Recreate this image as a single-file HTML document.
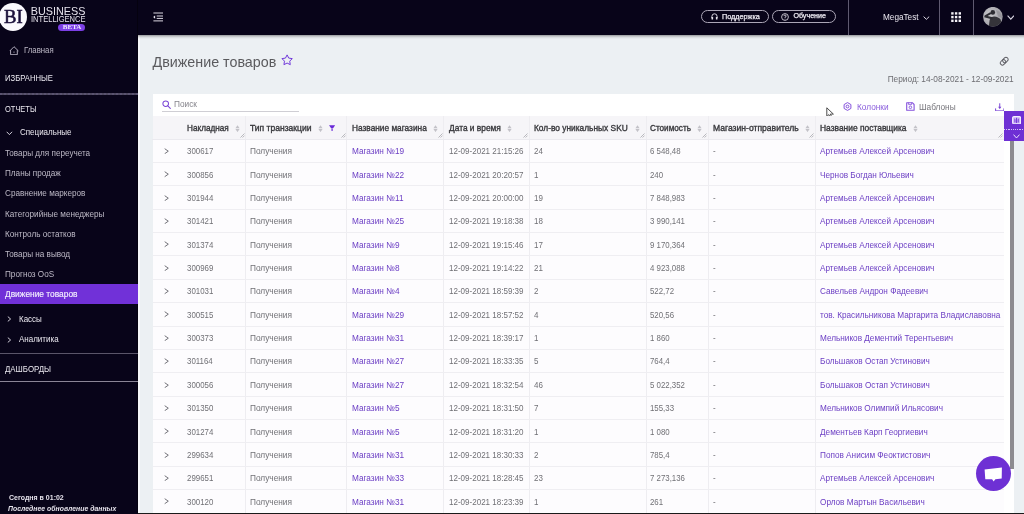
<!DOCTYPE html>
<html><head><meta charset="utf-8"><title>Движение товаров</title>
<style>
html,body{margin:0;padding:0;width:1024px;height:514px;overflow:hidden;background:#eef0f3;}
body{position:relative;font-family:"Liberation Sans", sans-serif;}
.t{position:absolute;white-space:nowrap;line-height:1;}
body{will-change:transform;}
.r{position:absolute;}
</style></head><body>
<div class="r" style="left:0px;top:0px;width:1024px;height:514px;background:#ecf0f3;"></div>
<div class="r" style="left:138px;top:35px;width:2px;height:479px;background:#f7f8fa;"></div>
<div class="r" style="left:0px;top:0px;width:1024px;height:35.2px;background:#080419;"></div>
<div class="r" style="left:138px;top:35.2px;width:886px;height:4px;background:linear-gradient(rgba(0,0,0,.36),rgba(0,0,0,.1) 50%,rgba(0,0,0,0));"></div>
<div class="r" style="left:0px;top:0px;width:138px;height:514px;background:#080419;"></div>
<div class="r" style="left:136.7px;top:0px;width:1px;height:514px;background:#05020f;"></div>
<div class="r" style="left:-1px;top:3px;width:28px;height:28px;border-radius:50%;background:#faf9fd"></div>
<div class="t" style="left:3.90px;top:7.12px;font-size:19.0px;color:#1a0f3a;font-weight:400;font-style:normal;font-family:'Liberation Serif', serif;-webkit-text-stroke:0.55px #1a0f3a;transform:scaleX(0.980);transform-origin:0 0;">BI</div>
<div class="t" style="left:30.80px;top:5.96px;font-size:10.8px;color:#e6e3ec;font-weight:400;font-style:normal;font-family:'Liberation Sans', sans-serif;">BUSINESS</div>
<div class="t" style="left:31.00px;top:15.17px;font-size:8.3px;color:#e6e3ec;font-weight:400;font-style:normal;font-family:'Liberation Sans', sans-serif;transform:scaleX(0.910);transform-origin:0 0;">INTELLIGENCE</div>
<div class="r" style="left:58px;top:23.7px;width:27.4px;height:7.4px;border-radius:4px;background:#7b3fe4"></div>
<div class="t" style="left:62.80px;top:24.07px;font-size:7.0px;color:#efeaff;font-weight:700;font-style:normal;font-family:'Liberation Serif', serif;">BETA</div>
<svg class="r" style="left:9px;top:45.5px" width="10.5" height="9.5" viewBox="0 0 10.5 9.5"><path d="M0.9 4.9 L5 0.7 L9.4 4.9 M1.6 4.3 V8.7 H8.3 V4.3" fill="none" stroke="#cfcad9" stroke-width="0.85" stroke-linejoin="round"/><path d="M5 5.2 L4 6.4 H6 Z" fill="#a39fb0"/></svg>
<div class="t" style="left:24.30px;top:46.86px;font-size:8.2px;color:#bdb9c6;font-weight:400;font-style:normal;font-family:'Liberation Sans', sans-serif;transform:scaleX(0.951);transform-origin:0 0;">Главная</div>
<div class="t" style="left:4.90px;top:74.09px;font-size:8.4px;color:#ebe9f0;font-weight:400;font-style:normal;font-family:'Liberation Sans', sans-serif;transform:scaleX(0.917);transform-origin:0 0;">ИЗБРАННЫЕ</div>
<div class="r" style="left:0px;top:92.6px;width:138px;height:2.8px;background:#040210;"></div>
<div class="r" style="left:0px;top:93.2px;width:138px;height:1.7px;background:repeating-linear-gradient(90deg,#5a5370 0 2px,#4f4a60 2px 4px);"></div>
<div class="t" style="left:5.00px;top:105.49px;font-size:8.4px;color:#ebe9f0;font-weight:400;font-style:normal;font-family:'Liberation Sans', sans-serif;transform:scaleX(0.893);transform-origin:0 0;">ОТЧЕТЫ</div>
<svg class="r" style="left:6px;top:130.5px" width="7" height="5" viewBox="0 0 7 5"><path d="M0.7 0.8 L3.4 3.6 L6.1 0.8" fill="none" stroke="#e6e3ec" stroke-width="0.9"/></svg>
<div class="t" style="left:19.50px;top:128.20px;font-size:8.5px;color:#ebe9f0;font-weight:400;font-style:normal;font-family:'Liberation Sans', sans-serif;transform:scaleX(0.941);transform-origin:0 0;">Специальные</div>
<div class="t" style="left:4.90px;top:148.92px;font-size:8.6px;color:#bdb9c6;font-weight:400;font-style:normal;font-family:'Liberation Sans', sans-serif;transform:scaleX(0.948);transform-origin:0 0;">Товары для переучета</div>
<div class="t" style="left:4.90px;top:169.12px;font-size:8.6px;color:#bdb9c6;font-weight:400;font-style:normal;font-family:'Liberation Sans', sans-serif;transform:scaleX(0.948);transform-origin:0 0;">Планы продаж</div>
<div class="t" style="left:4.90px;top:189.32px;font-size:8.6px;color:#bdb9c6;font-weight:400;font-style:normal;font-family:'Liberation Sans', sans-serif;transform:scaleX(0.948);transform-origin:0 0;">Сравнение маркеров</div>
<div class="t" style="left:4.90px;top:209.52px;font-size:8.6px;color:#bdb9c6;font-weight:400;font-style:normal;font-family:'Liberation Sans', sans-serif;transform:scaleX(0.948);transform-origin:0 0;">Категорийные менеджеры</div>
<div class="t" style="left:4.90px;top:229.72px;font-size:8.6px;color:#bdb9c6;font-weight:400;font-style:normal;font-family:'Liberation Sans', sans-serif;transform:scaleX(0.948);transform-origin:0 0;">Контроль остатков</div>
<div class="t" style="left:4.90px;top:249.92px;font-size:8.6px;color:#bdb9c6;font-weight:400;font-style:normal;font-family:'Liberation Sans', sans-serif;transform:scaleX(0.948);transform-origin:0 0;">Товары на вывод</div>
<div class="t" style="left:4.90px;top:270.12px;font-size:8.6px;color:#bdb9c6;font-weight:400;font-style:normal;font-family:'Liberation Sans', sans-serif;transform:scaleX(0.948);transform-origin:0 0;">Прогноз OoS</div>
<div class="r" style="left:0px;top:283.7px;width:138px;height:20.1px;background:#7131d8;"></div>
<div class="t" style="left:5.00px;top:289.52px;font-size:8.6px;color:#f3efff;font-weight:400;font-style:normal;font-family:'Liberation Sans', sans-serif;-webkit-text-stroke:0.15px #f3efff;transform:scaleX(0.974);transform-origin:0 0;">Движение товаров</div>
<svg class="r" style="left:6.5px;top:316.4px" width="5" height="6" viewBox="0 0 5 6"><path d="M0.8 0.6 L3.6 3 L0.8 5.4" fill="none" stroke="#e6e3ec" stroke-width="0.9"/></svg>
<div class="t" style="left:19.30px;top:315.00px;font-size:8.5px;color:#ebe9f0;font-weight:400;font-style:normal;font-family:'Liberation Sans', sans-serif;transform:scaleX(0.941);transform-origin:0 0;">Кассы</div>
<svg class="r" style="left:6.5px;top:336.59999999999997px" width="5" height="6" viewBox="0 0 5 6"><path d="M0.8 0.6 L3.6 3 L0.8 5.4" fill="none" stroke="#e6e3ec" stroke-width="0.9"/></svg>
<div class="t" style="left:19.30px;top:335.20px;font-size:8.5px;color:#ebe9f0;font-weight:400;font-style:normal;font-family:'Liberation Sans', sans-serif;transform:scaleX(0.941);transform-origin:0 0;">Аналитика</div>
<div class="r" style="left:0px;top:353.2px;width:138px;height:1.2px;background:#5a5569;"></div>
<div class="t" style="left:5.00px;top:364.69px;font-size:8.4px;color:#ebe9f0;font-weight:400;font-style:normal;font-family:'Liberation Sans', sans-serif;transform:scaleX(0.940);transform-origin:0 0;">ДАШБОРДЫ</div>
<div class="r" style="left:0px;top:380.8px;width:138px;height:1px;background:#8a8596;"></div>
<div class="t" style="left:8.50px;top:493.54px;font-size:7.4px;color:#e6e3ec;font-weight:700;font-style:normal;font-family:'Liberation Sans', sans-serif;transform:scaleX(0.946);transform-origin:0 0;">Сегодня в 01:02</div>
<div class="t" style="left:8.30px;top:504.51px;font-size:7.2px;color:#e6e3ec;font-weight:700;font-style:italic;font-family:'Liberation Sans', sans-serif;transform:scaleX(0.958);transform-origin:0 0;">Последнее обновление данных</div>
<svg class="r" style="left:152.5px;top:11.5px" width="11" height="10" viewBox="0 0 11 10"><path d="M0.4 1.0 H10 M3.7 4.0 H10 M3.7 6.4 H10 M0.4 8.9 H10" stroke="#e8e5ee" stroke-width="0.95"/><path d="M0.2 5.1 L2.1 3.4 V6.8 Z" fill="#eeeaf5"/></svg>
<div class="r" style="left:700.6px;top:10.2px;width:68.3px;height:12.9px;border:0.9px solid #aba6b6;border-radius:7px;box-sizing:border-box"></div>
<div class="r" style="left:772px;top:10.2px;width:64.4px;height:12.9px;border:0.9px solid #aba6b6;border-radius:7px;box-sizing:border-box"></div>
<svg class="r" style="left:710.8px;top:13.2px" width="7" height="7" viewBox="0 0 7 7"><path d="M0.9 5 V3.4 A2.6 2.6 0 0 1 6.1 3.4 V5" fill="none" stroke="#e8e5ee" stroke-width="0.9"/><rect x="0.5" y="4" width="1.6" height="2.6" rx="0.5" fill="#e8e5ee"/><rect x="4.9" y="4" width="1.6" height="2.6" rx="0.5" fill="#e8e5ee"/></svg>
<div class="t" style="left:722.00px;top:13.16px;font-size:7.25px;color:#ece9f1;font-weight:400;font-style:normal;font-family:'Liberation Sans', sans-serif;-webkit-text-stroke:0.25px #ece9f1;">Поддержка</div>
<svg class="r" style="left:781.2px;top:12.6px" width="8" height="8" viewBox="0 0 8 8"><circle cx="4" cy="4" r="3.4" fill="none" stroke="#e8e5ee" stroke-width="0.8"/><path d="M2.9 3.1 A1.1 1.1 0 1 1 4 4.2 V4.9" fill="none" stroke="#e8e5ee" stroke-width="0.8"/><circle cx="4" cy="5.9" r="0.45" fill="#e8e5ee"/></svg>
<div class="t" style="left:793.40px;top:13.26px;font-size:7.13px;color:#ece9f1;font-weight:400;font-style:normal;font-family:'Liberation Sans', sans-serif;-webkit-text-stroke:0.25px #ece9f1;">Обучение</div>
<div class="r" style="left:848.4px;top:0px;width:0.9px;height:35.2px;background:#5f5a70;"></div>
<div class="r" style="left:939.4px;top:0px;width:0.9px;height:35.2px;background:#5f5a70;"></div>
<div class="r" style="left:973.3px;top:0px;width:0.9px;height:35.2px;background:#5f5a70;"></div>
<div class="t" style="left:883.00px;top:12.94px;font-size:8.7px;color:#ebe8f0;font-weight:400;font-style:normal;font-family:'Liberation Sans', sans-serif;transform:scaleX(0.943);transform-origin:0 0;">MegaTest</div>
<svg class="r" style="left:922.6px;top:15.6px" width="7" height="4" viewBox="0 0 7 4"><path d="M0.6 0.6 L3.4 3.3 L6.2 0.6" fill="none" stroke="#dcd8e4" stroke-width="1"/></svg>
<svg class="r" style="left:951.4px;top:11.7px" width="10" height="10" viewBox="0 0 10 10"><rect x="0.2" y="0.2" width="2.4" height="2.4" fill="#f4f2f7"/><rect x="0.2" y="3.9000000000000004" width="2.4" height="2.4" fill="#f4f2f7"/><rect x="0.2" y="7.6000000000000005" width="2.4" height="2.4" fill="#f4f2f7"/><rect x="3.9000000000000004" y="0.2" width="2.4" height="2.4" fill="#f4f2f7"/><rect x="3.9000000000000004" y="3.9000000000000004" width="2.4" height="2.4" fill="#f4f2f7"/><rect x="3.9000000000000004" y="7.6000000000000005" width="2.4" height="2.4" fill="#f4f2f7"/><rect x="7.6000000000000005" y="0.2" width="2.4" height="2.4" fill="#f4f2f7"/><rect x="7.6000000000000005" y="3.9000000000000004" width="2.4" height="2.4" fill="#f4f2f7"/><rect x="7.6000000000000005" y="7.6000000000000005" width="2.4" height="2.4" fill="#f4f2f7"/></svg>
<svg class="r" style="left:982.9px;top:7px" width="20" height="20" viewBox="0 0 20 20"><defs><clipPath id="av"><circle cx="9.9" cy="9.7" r="9.8"/></clipPath><radialGradient id="avg" cx="0.35" cy="0.4" r="0.7"><stop offset="0" stop-color="#c9c8cc"/><stop offset="1" stop-color="#9d9ca2"/></radialGradient></defs><circle cx="9.9" cy="9.7" r="9.8" fill="url(#avg)"/><g clip-path="url(#av)" fill="#2e2d33"><path d="M5.8 20 L6.6 13 Q8 9.6 11.2 9.4 Q15.5 9.6 17.5 12.5 L20 20 Z" fill="#35343a"/><circle cx="9.8" cy="5.4" r="2.3"/><path d="M9.5 12.6 L1.2 10.3 L1.6 8.6 L7.2 5.2 L8.6 6.8 L4.6 9.1 L9.5 10.2 Z"/><path d="M13 3 Q17 4 18.5 8 L19 11 L15 9.5 Z" fill="#8a898f" opacity="0.6"/></g></svg>
<svg class="r" style="left:1006.9px;top:15.4px" width="7.6" height="5" viewBox="0 0 7.6 5"><path d="M0.6 0.7 L3.8 4.1 L7 0.7" fill="none" stroke="#dcd8e4" stroke-width="1.1"/></svg>
<div class="t" style="left:152.50px;top:55.10px;font-size:14.3px;color:#5a5a5d;font-weight:400;font-style:normal;font-family:'Liberation Sans', sans-serif;">Движение товаров</div>
<svg class="r" style="left:280.5px;top:54.0px" width="12.5" height="12.5" viewBox="0 0 12.5 12.5"><path d="M6.10 0.90 L7.72 4.08 L11.24 4.63 L8.72 7.15 L9.27 10.67 L6.10 9.05 L2.93 10.67 L3.48 7.15 L0.96 4.63 L4.48 4.08 Z" fill="none" stroke="#6a30d8" stroke-width="0.95" stroke-linejoin="round"/></svg>
<svg class="r" style="left:999.3px;top:56.3px" width="10.4" height="10.4" viewBox="0 0 10.4 10.4"><g transform="rotate(-45 5.2 5.2)" fill="none" stroke="#5e5e64" stroke-width="0.95"><rect x="0.6" y="3.1" width="5.8" height="4.2" rx="2.1"/><rect x="4.0" y="3.1" width="5.8" height="4.2" rx="2.1"/></g></svg>
<div class="t" style="right:10.40px;top:75.37px;font-size:8.3px;color:#6d6d72;font-weight:400;font-style:normal;font-family:'Liberation Sans', sans-serif;">Период: 14-08-2021 - 12-09-2021</div>
<div class="r" style="left:152.6px;top:94px;width:861.4px;height:420px;background:#ffffff;"></div>
<svg class="r" style="left:161.8px;top:99.5px" width="9" height="9" viewBox="0 0 9 9"><circle cx="3.7" cy="3.7" r="2.8" fill="none" stroke="#7a45d6" stroke-width="1.05"/><path d="M5.8 5.8 L8.3 8.3" stroke="#7a45d6" stroke-width="1.1" stroke-linecap="round"/></svg>
<div class="t" style="left:174.00px;top:100.05px;font-size:8.8px;color:#85848b;font-weight:400;font-style:normal;font-family:'Liberation Sans', sans-serif;transform:scaleX(0.943);transform-origin:0 0;">Поиск</div>
<div class="r" style="left:162px;top:111px;width:137px;height:0.9px;background:#cfced4;"></div>
<svg class="r" style="left:842.6px;top:101.8px" width="9" height="9" viewBox="0 0 9 9"><path d="M4.5 0.6 L7.9 2.55 V6.45 L4.5 8.4 L1.1 6.45 V2.55 Z" fill="none" stroke="#8552dc" stroke-width="1"/><circle cx="4.5" cy="4.5" r="1.4" fill="none" stroke="#8552dc" stroke-width="1"/></svg>
<div class="t" style="left:856.50px;top:102.94px;font-size:8.7px;color:#8b5fdc;font-weight:400;font-style:normal;font-family:'Liberation Sans', sans-serif;transform:scaleX(0.954);transform-origin:0 0;">Колонки</div>
<svg class="r" style="left:905.8px;top:102.4px" width="9" height="9" viewBox="0 0 9 9"><path d="M0.7 0.7 H6.3 L8.1 2.5 V8.2 H0.7 Z" fill="none" stroke="#8552dc" stroke-width="1.1" stroke-linejoin="round"/><path d="M2.6 0.7 V2.6 H5.6 V0.7" fill="none" stroke="#8552dc" stroke-width="0.8"/><circle cx="4.4" cy="5.3" r="1.3" fill="none" stroke="#8552dc" stroke-width="0.9"/></svg>
<div class="t" style="left:919.00px;top:102.94px;font-size:8.7px;color:#76757b;font-weight:400;font-style:normal;font-family:'Liberation Sans', sans-serif;transform:scaleX(0.954);transform-origin:0 0;">Шаблоны</div>
<svg class="r" style="left:995px;top:102.6px" width="9.5" height="8.5" viewBox="0 0 9.5 8.5"><path d="M4.75 0.3 V5.2 M0.6 5.4 V7.9 H8.9 V5.4" fill="none" stroke="#7a45d6" stroke-width="1"/><path d="M3.1 3.8 L4.75 5.9 L6.4 3.8 Z" fill="#7a45d6"/></svg>
<svg class="r" style="left:826px;top:106.6px" width="9" height="12" viewBox="0 0 9 12"><path d="M0.8 0.8 L0.8 9.5 L2.9 7.6 L4.5 11 L5.9 10.4 L4.4 7.1 L7.4 7.1 Z" fill="#fafafa" stroke="#3a3a3a" stroke-width="0.9" stroke-linejoin="round"/></svg>
<div class="r" style="left:152.6px;top:116px;width:851.4px;height:23.599999999999994px;background:#f6f5f8;"></div>
<div class="r" style="left:152.6px;top:139.6px;width:851.4px;height:374.4px;background:#fdfcfe;"></div>
<div class="r" style="left:245.4px;top:116px;width:0.8px;height:398px;background:#eeedf1;"></div>
<div class="r" style="left:346.2px;top:116px;width:0.8px;height:398px;background:#eeedf1;"></div>
<div class="r" style="left:443.2px;top:116px;width:0.8px;height:398px;background:#eeedf1;"></div>
<div class="r" style="left:529.0px;top:116px;width:0.8px;height:398px;background:#eeedf1;"></div>
<div class="r" style="left:645.6px;top:116px;width:0.8px;height:398px;background:#eeedf1;"></div>
<div class="r" style="left:707.5px;top:116px;width:0.8px;height:398px;background:#eeedf1;"></div>
<div class="r" style="left:815.0px;top:116px;width:0.8px;height:398px;background:#eeedf1;"></div>
<div class="r" style="left:152.6px;top:162.0px;width:851.4px;height:0.9px;background:#efeef2;"></div>
<div class="r" style="left:152.6px;top:185.37px;width:851.4px;height:0.9px;background:#efeef2;"></div>
<div class="r" style="left:152.6px;top:208.74px;width:851.4px;height:0.9px;background:#efeef2;"></div>
<div class="r" style="left:152.6px;top:232.11px;width:851.4px;height:0.9px;background:#efeef2;"></div>
<div class="r" style="left:152.6px;top:255.48000000000002px;width:851.4px;height:0.9px;background:#efeef2;"></div>
<div class="r" style="left:152.6px;top:278.85px;width:851.4px;height:0.9px;background:#efeef2;"></div>
<div class="r" style="left:152.6px;top:302.22px;width:851.4px;height:0.9px;background:#efeef2;"></div>
<div class="r" style="left:152.6px;top:325.59000000000003px;width:851.4px;height:0.9px;background:#efeef2;"></div>
<div class="r" style="left:152.6px;top:348.96000000000004px;width:851.4px;height:0.9px;background:#efeef2;"></div>
<div class="r" style="left:152.6px;top:372.33000000000004px;width:851.4px;height:0.9px;background:#efeef2;"></div>
<div class="r" style="left:152.6px;top:395.70000000000005px;width:851.4px;height:0.9px;background:#efeef2;"></div>
<div class="r" style="left:152.6px;top:419.07px;width:851.4px;height:0.9px;background:#efeef2;"></div>
<div class="r" style="left:152.6px;top:442.44px;width:851.4px;height:0.9px;background:#efeef2;"></div>
<div class="r" style="left:152.6px;top:465.81px;width:851.4px;height:0.9px;background:#efeef2;"></div>
<div class="r" style="left:152.6px;top:489.18px;width:851.4px;height:0.9px;background:#efeef2;"></div>
<div class="r" style="left:152px;top:139.2px;width:852px;height:0.8px;background:#ebeaef;"></div>
<div class="t" style="left:186.60px;top:123.82px;font-size:8.6px;color:#38383c;font-weight:400;font-style:normal;font-family:'Liberation Sans', sans-serif;-webkit-text-stroke:0.35px #38383c;transform:scaleX(0.953);transform-origin:0 0;">Накладная</div>
<svg class="r" style="left:234.7px;top:124.9px" width="5" height="7.5" viewBox="0 0 5 7.5"><path d="M0.4 3.3 L2.5 0.3 L4.6 3.3 Z M0.4 4.0 L2.5 7.1 L4.6 4.0 Z" fill="#c3c2c8"/></svg>
<div class="t" style="left:250.30px;top:123.82px;font-size:8.6px;color:#38383c;font-weight:400;font-style:normal;font-family:'Liberation Sans', sans-serif;-webkit-text-stroke:0.35px #38383c;transform:scaleX(0.992);transform-origin:0 0;">Тип транзакции</div>
<svg class="r" style="left:317.5px;top:124.9px" width="5" height="7.5" viewBox="0 0 5 7.5"><path d="M0.4 3.3 L2.5 0.3 L4.6 3.3 Z M0.4 4.0 L2.5 7.1 L4.6 4.0 Z" fill="#c3c2c8"/></svg>
<div class="t" style="left:351.80px;top:123.82px;font-size:8.6px;color:#38383c;font-weight:400;font-style:normal;font-family:'Liberation Sans', sans-serif;-webkit-text-stroke:0.35px #38383c;transform:scaleX(0.966);transform-origin:0 0;">Название магазина</div>
<svg class="r" style="left:432.8px;top:124.9px" width="5" height="7.5" viewBox="0 0 5 7.5"><path d="M0.4 3.3 L2.5 0.3 L4.6 3.3 Z M0.4 4.0 L2.5 7.1 L4.6 4.0 Z" fill="#c3c2c8"/></svg>
<div class="t" style="left:448.75px;top:123.82px;font-size:8.6px;color:#38383c;font-weight:400;font-style:normal;font-family:'Liberation Sans', sans-serif;-webkit-text-stroke:0.35px #38383c;transform:scaleX(0.974);transform-origin:0 0;">Дата и время</div>
<svg class="r" style="left:507px;top:124.9px" width="5" height="7.5" viewBox="0 0 5 7.5"><path d="M0.4 3.3 L2.5 0.3 L4.6 3.3 Z M0.4 4.0 L2.5 7.1 L4.6 4.0 Z" fill="#c3c2c8"/></svg>
<div class="t" style="left:534.30px;top:123.82px;font-size:8.6px;color:#38383c;font-weight:400;font-style:normal;font-family:'Liberation Sans', sans-serif;-webkit-text-stroke:0.35px #38383c;transform:scaleX(0.972);transform-origin:0 0;">Кол-во уникальных SKU</div>
<svg class="r" style="left:634.7px;top:124.9px" width="5" height="7.5" viewBox="0 0 5 7.5"><path d="M0.4 3.3 L2.5 0.3 L4.6 3.3 Z M0.4 4.0 L2.5 7.1 L4.6 4.0 Z" fill="#c3c2c8"/></svg>
<div class="t" style="left:650.00px;top:123.82px;font-size:8.6px;color:#38383c;font-weight:400;font-style:normal;font-family:'Liberation Sans', sans-serif;-webkit-text-stroke:0.35px #38383c;transform:scaleX(0.952);transform-origin:0 0;">Стоимость</div>
<svg class="r" style="left:697px;top:124.9px" width="5" height="7.5" viewBox="0 0 5 7.5"><path d="M0.4 3.3 L2.5 0.3 L4.6 3.3 Z M0.4 4.0 L2.5 7.1 L4.6 4.0 Z" fill="#c3c2c8"/></svg>
<div class="t" style="left:712.70px;top:123.82px;font-size:8.6px;color:#38383c;font-weight:400;font-style:normal;font-family:'Liberation Sans', sans-serif;-webkit-text-stroke:0.35px #38383c;transform:scaleX(0.997);transform-origin:0 0;">Магазин-отправитель</div>
<svg class="r" style="left:804.5px;top:124.9px" width="5" height="7.5" viewBox="0 0 5 7.5"><path d="M0.4 3.3 L2.5 0.3 L4.6 3.3 Z M0.4 4.0 L2.5 7.1 L4.6 4.0 Z" fill="#c3c2c8"/></svg>
<div class="t" style="left:820.20px;top:123.82px;font-size:8.6px;color:#38383c;font-weight:400;font-style:normal;font-family:'Liberation Sans', sans-serif;-webkit-text-stroke:0.35px #38383c;transform:scaleX(0.980);transform-origin:0 0;">Название поставщика</div>
<svg class="r" style="left:912.8px;top:124.9px" width="5" height="7.5" viewBox="0 0 5 7.5"><path d="M0.4 3.3 L2.5 0.3 L4.6 3.3 Z M0.4 4.0 L2.5 7.1 L4.6 4.0 Z" fill="#c3c2c8"/></svg>
<svg class="r" style="left:239.8px;top:133.4px" width="5" height="5" viewBox="0 0 5 5"><path d="M0.5 4.5 L4.5 0.5 M2.6 4.5 L4.5 2.6" stroke="#8f8e95" stroke-width="0.6"/></svg>
<svg class="r" style="left:340.59999999999997px;top:133.4px" width="5" height="5" viewBox="0 0 5 5"><path d="M0.5 4.5 L4.5 0.5 M2.6 4.5 L4.5 2.6" stroke="#8f8e95" stroke-width="0.6"/></svg>
<svg class="r" style="left:437.59999999999997px;top:133.4px" width="5" height="5" viewBox="0 0 5 5"><path d="M0.5 4.5 L4.5 0.5 M2.6 4.5 L4.5 2.6" stroke="#8f8e95" stroke-width="0.6"/></svg>
<svg class="r" style="left:523.4px;top:133.4px" width="5" height="5" viewBox="0 0 5 5"><path d="M0.5 4.5 L4.5 0.5 M2.6 4.5 L4.5 2.6" stroke="#8f8e95" stroke-width="0.6"/></svg>
<svg class="r" style="left:640.0px;top:133.4px" width="5" height="5" viewBox="0 0 5 5"><path d="M0.5 4.5 L4.5 0.5 M2.6 4.5 L4.5 2.6" stroke="#8f8e95" stroke-width="0.6"/></svg>
<svg class="r" style="left:701.9px;top:133.4px" width="5" height="5" viewBox="0 0 5 5"><path d="M0.5 4.5 L4.5 0.5 M2.6 4.5 L4.5 2.6" stroke="#8f8e95" stroke-width="0.6"/></svg>
<svg class="r" style="left:809.4px;top:133.4px" width="5" height="5" viewBox="0 0 5 5"><path d="M0.5 4.5 L4.5 0.5 M2.6 4.5 L4.5 2.6" stroke="#8f8e95" stroke-width="0.6"/></svg>
<svg class="r" style="left:998.4px;top:133.4px" width="5" height="5" viewBox="0 0 5 5"><path d="M0.5 4.5 L4.5 0.5 M2.6 4.5 L4.5 2.6" stroke="#8f8e95" stroke-width="0.6"/></svg>
<svg class="r" style="left:328.6px;top:124.6px" width="6.2" height="6.8" viewBox="0 0 6.2 6.8"><path d="M0 0.2 H6.2 L3.9 3.6 H2.3 Z M2.3 4.2 H3.9 V5.4 Q3.1 6.2 2.3 5.4 Z" fill="#6a2ad8"/></svg>
<svg class="r" style="left:163.6px;top:147.90px" width="5.2" height="6.4" viewBox="0 0 5.2 6.4"><path d="M0.7 0.7 L4.3 3.2 L0.7 5.7" fill="none" stroke="#6a6a70" stroke-width="0.95"/></svg>
<div class="t" style="left:186.60px;top:147.14px;font-size:8.7px;color:#707075;font-weight:400;font-style:normal;font-family:'Liberation Sans', sans-serif;transform:scaleX(0.906);transform-origin:0 0;">300617</div>
<div class="t" style="left:250.30px;top:147.14px;font-size:8.7px;color:#707075;font-weight:400;font-style:normal;font-family:'Liberation Sans', sans-serif;transform:scaleX(0.953);transform-origin:0 0;">Получения</div>
<div class="t" style="left:351.80px;top:147.14px;font-size:8.7px;color:#6c3fc4;font-weight:400;font-style:normal;font-family:'Liberation Sans', sans-serif;transform:scaleX(0.949);transform-origin:0 0;">Магазин №19</div>
<div class="t" style="left:448.75px;top:147.14px;font-size:8.7px;color:#707075;font-weight:400;font-style:normal;font-family:'Liberation Sans', sans-serif;transform:scaleX(0.924);transform-origin:0 0;">12-09-2021 21:15:26</div>
<div class="t" style="left:534.30px;top:147.14px;font-size:8.7px;color:#707075;font-weight:400;font-style:normal;font-family:'Liberation Sans', sans-serif;transform:scaleX(0.920);transform-origin:0 0;">24</div>
<div class="t" style="left:650.00px;top:147.14px;font-size:8.7px;color:#707075;font-weight:400;font-style:normal;font-family:'Liberation Sans', sans-serif;transform:scaleX(0.903);transform-origin:0 0;">6 548,48</div>
<div class="t" style="left:713.20px;top:147.14px;font-size:8.7px;color:#707075;font-weight:400;font-style:normal;font-family:'Liberation Sans', sans-serif;transform:scaleX(0.920);transform-origin:0 0;">-</div>
<div class="t" style="left:820.20px;top:147.14px;font-size:8.7px;color:#6c3fc4;font-weight:400;font-style:normal;font-family:'Liberation Sans', sans-serif;transform:scaleX(0.945);transform-origin:0 0;">Артемьев Алексей Арсенович</div>
<svg class="r" style="left:163.6px;top:171.27px" width="5.2" height="6.4" viewBox="0 0 5.2 6.4"><path d="M0.7 0.7 L4.3 3.2 L0.7 5.7" fill="none" stroke="#6a6a70" stroke-width="0.95"/></svg>
<div class="t" style="left:186.60px;top:170.51px;font-size:8.7px;color:#707075;font-weight:400;font-style:normal;font-family:'Liberation Sans', sans-serif;transform:scaleX(0.906);transform-origin:0 0;">300856</div>
<div class="t" style="left:250.30px;top:170.51px;font-size:8.7px;color:#707075;font-weight:400;font-style:normal;font-family:'Liberation Sans', sans-serif;transform:scaleX(0.953);transform-origin:0 0;">Получения</div>
<div class="t" style="left:351.80px;top:170.51px;font-size:8.7px;color:#6c3fc4;font-weight:400;font-style:normal;font-family:'Liberation Sans', sans-serif;transform:scaleX(0.949);transform-origin:0 0;">Магазин №22</div>
<div class="t" style="left:448.75px;top:170.51px;font-size:8.7px;color:#707075;font-weight:400;font-style:normal;font-family:'Liberation Sans', sans-serif;transform:scaleX(0.924);transform-origin:0 0;">12-09-2021 20:20:57</div>
<div class="t" style="left:534.30px;top:170.51px;font-size:8.7px;color:#707075;font-weight:400;font-style:normal;font-family:'Liberation Sans', sans-serif;transform:scaleX(0.920);transform-origin:0 0;">1</div>
<div class="t" style="left:650.00px;top:170.51px;font-size:8.7px;color:#707075;font-weight:400;font-style:normal;font-family:'Liberation Sans', sans-serif;transform:scaleX(0.903);transform-origin:0 0;">240</div>
<div class="t" style="left:713.20px;top:170.51px;font-size:8.7px;color:#707075;font-weight:400;font-style:normal;font-family:'Liberation Sans', sans-serif;transform:scaleX(0.920);transform-origin:0 0;">-</div>
<div class="t" style="left:820.20px;top:170.51px;font-size:8.7px;color:#6c3fc4;font-weight:400;font-style:normal;font-family:'Liberation Sans', sans-serif;transform:scaleX(0.945);transform-origin:0 0;">Чернов Богдан Юльевич</div>
<svg class="r" style="left:163.6px;top:194.64px" width="5.2" height="6.4" viewBox="0 0 5.2 6.4"><path d="M0.7 0.7 L4.3 3.2 L0.7 5.7" fill="none" stroke="#6a6a70" stroke-width="0.95"/></svg>
<div class="t" style="left:186.60px;top:193.88px;font-size:8.7px;color:#707075;font-weight:400;font-style:normal;font-family:'Liberation Sans', sans-serif;transform:scaleX(0.906);transform-origin:0 0;">301944</div>
<div class="t" style="left:250.30px;top:193.88px;font-size:8.7px;color:#707075;font-weight:400;font-style:normal;font-family:'Liberation Sans', sans-serif;transform:scaleX(0.953);transform-origin:0 0;">Получения</div>
<div class="t" style="left:351.80px;top:193.88px;font-size:8.7px;color:#6c3fc4;font-weight:400;font-style:normal;font-family:'Liberation Sans', sans-serif;transform:scaleX(0.949);transform-origin:0 0;">Магазин №11</div>
<div class="t" style="left:448.75px;top:193.88px;font-size:8.7px;color:#707075;font-weight:400;font-style:normal;font-family:'Liberation Sans', sans-serif;transform:scaleX(0.924);transform-origin:0 0;">12-09-2021 20:00:00</div>
<div class="t" style="left:534.30px;top:193.88px;font-size:8.7px;color:#707075;font-weight:400;font-style:normal;font-family:'Liberation Sans', sans-serif;transform:scaleX(0.920);transform-origin:0 0;">19</div>
<div class="t" style="left:650.00px;top:193.88px;font-size:8.7px;color:#707075;font-weight:400;font-style:normal;font-family:'Liberation Sans', sans-serif;transform:scaleX(0.903);transform-origin:0 0;">7 848,983</div>
<div class="t" style="left:713.20px;top:193.88px;font-size:8.7px;color:#707075;font-weight:400;font-style:normal;font-family:'Liberation Sans', sans-serif;transform:scaleX(0.920);transform-origin:0 0;">-</div>
<div class="t" style="left:820.20px;top:193.88px;font-size:8.7px;color:#6c3fc4;font-weight:400;font-style:normal;font-family:'Liberation Sans', sans-serif;transform:scaleX(0.945);transform-origin:0 0;">Артемьев Алексей Арсенович</div>
<svg class="r" style="left:163.6px;top:218.01px" width="5.2" height="6.4" viewBox="0 0 5.2 6.4"><path d="M0.7 0.7 L4.3 3.2 L0.7 5.7" fill="none" stroke="#6a6a70" stroke-width="0.95"/></svg>
<div class="t" style="left:186.60px;top:217.25px;font-size:8.7px;color:#707075;font-weight:400;font-style:normal;font-family:'Liberation Sans', sans-serif;transform:scaleX(0.906);transform-origin:0 0;">301421</div>
<div class="t" style="left:250.30px;top:217.25px;font-size:8.7px;color:#707075;font-weight:400;font-style:normal;font-family:'Liberation Sans', sans-serif;transform:scaleX(0.953);transform-origin:0 0;">Получения</div>
<div class="t" style="left:351.80px;top:217.25px;font-size:8.7px;color:#6c3fc4;font-weight:400;font-style:normal;font-family:'Liberation Sans', sans-serif;transform:scaleX(0.949);transform-origin:0 0;">Магазин №25</div>
<div class="t" style="left:448.75px;top:217.25px;font-size:8.7px;color:#707075;font-weight:400;font-style:normal;font-family:'Liberation Sans', sans-serif;transform:scaleX(0.924);transform-origin:0 0;">12-09-2021 19:18:38</div>
<div class="t" style="left:534.30px;top:217.25px;font-size:8.7px;color:#707075;font-weight:400;font-style:normal;font-family:'Liberation Sans', sans-serif;transform:scaleX(0.920);transform-origin:0 0;">18</div>
<div class="t" style="left:650.00px;top:217.25px;font-size:8.7px;color:#707075;font-weight:400;font-style:normal;font-family:'Liberation Sans', sans-serif;transform:scaleX(0.903);transform-origin:0 0;">3 990,141</div>
<div class="t" style="left:713.20px;top:217.25px;font-size:8.7px;color:#707075;font-weight:400;font-style:normal;font-family:'Liberation Sans', sans-serif;transform:scaleX(0.920);transform-origin:0 0;">-</div>
<div class="t" style="left:820.20px;top:217.25px;font-size:8.7px;color:#6c3fc4;font-weight:400;font-style:normal;font-family:'Liberation Sans', sans-serif;transform:scaleX(0.945);transform-origin:0 0;">Артемьев Алексей Арсенович</div>
<svg class="r" style="left:163.6px;top:241.38px" width="5.2" height="6.4" viewBox="0 0 5.2 6.4"><path d="M0.7 0.7 L4.3 3.2 L0.7 5.7" fill="none" stroke="#6a6a70" stroke-width="0.95"/></svg>
<div class="t" style="left:186.60px;top:240.62px;font-size:8.7px;color:#707075;font-weight:400;font-style:normal;font-family:'Liberation Sans', sans-serif;transform:scaleX(0.906);transform-origin:0 0;">301374</div>
<div class="t" style="left:250.30px;top:240.62px;font-size:8.7px;color:#707075;font-weight:400;font-style:normal;font-family:'Liberation Sans', sans-serif;transform:scaleX(0.953);transform-origin:0 0;">Получения</div>
<div class="t" style="left:351.80px;top:240.62px;font-size:8.7px;color:#6c3fc4;font-weight:400;font-style:normal;font-family:'Liberation Sans', sans-serif;transform:scaleX(0.949);transform-origin:0 0;">Магазин №9</div>
<div class="t" style="left:448.75px;top:240.62px;font-size:8.7px;color:#707075;font-weight:400;font-style:normal;font-family:'Liberation Sans', sans-serif;transform:scaleX(0.924);transform-origin:0 0;">12-09-2021 19:15:46</div>
<div class="t" style="left:534.30px;top:240.62px;font-size:8.7px;color:#707075;font-weight:400;font-style:normal;font-family:'Liberation Sans', sans-serif;transform:scaleX(0.920);transform-origin:0 0;">17</div>
<div class="t" style="left:650.00px;top:240.62px;font-size:8.7px;color:#707075;font-weight:400;font-style:normal;font-family:'Liberation Sans', sans-serif;transform:scaleX(0.903);transform-origin:0 0;">9 170,364</div>
<div class="t" style="left:713.20px;top:240.62px;font-size:8.7px;color:#707075;font-weight:400;font-style:normal;font-family:'Liberation Sans', sans-serif;transform:scaleX(0.920);transform-origin:0 0;">-</div>
<div class="t" style="left:820.20px;top:240.62px;font-size:8.7px;color:#6c3fc4;font-weight:400;font-style:normal;font-family:'Liberation Sans', sans-serif;transform:scaleX(0.945);transform-origin:0 0;">Артемьев Алексей Арсенович</div>
<svg class="r" style="left:163.6px;top:264.75px" width="5.2" height="6.4" viewBox="0 0 5.2 6.4"><path d="M0.7 0.7 L4.3 3.2 L0.7 5.7" fill="none" stroke="#6a6a70" stroke-width="0.95"/></svg>
<div class="t" style="left:186.60px;top:263.99px;font-size:8.7px;color:#707075;font-weight:400;font-style:normal;font-family:'Liberation Sans', sans-serif;transform:scaleX(0.906);transform-origin:0 0;">300969</div>
<div class="t" style="left:250.30px;top:263.99px;font-size:8.7px;color:#707075;font-weight:400;font-style:normal;font-family:'Liberation Sans', sans-serif;transform:scaleX(0.953);transform-origin:0 0;">Получения</div>
<div class="t" style="left:351.80px;top:263.99px;font-size:8.7px;color:#6c3fc4;font-weight:400;font-style:normal;font-family:'Liberation Sans', sans-serif;transform:scaleX(0.949);transform-origin:0 0;">Магазин №8</div>
<div class="t" style="left:448.75px;top:263.99px;font-size:8.7px;color:#707075;font-weight:400;font-style:normal;font-family:'Liberation Sans', sans-serif;transform:scaleX(0.924);transform-origin:0 0;">12-09-2021 19:14:22</div>
<div class="t" style="left:534.30px;top:263.99px;font-size:8.7px;color:#707075;font-weight:400;font-style:normal;font-family:'Liberation Sans', sans-serif;transform:scaleX(0.920);transform-origin:0 0;">21</div>
<div class="t" style="left:650.00px;top:263.99px;font-size:8.7px;color:#707075;font-weight:400;font-style:normal;font-family:'Liberation Sans', sans-serif;transform:scaleX(0.903);transform-origin:0 0;">4 923,088</div>
<div class="t" style="left:713.20px;top:263.99px;font-size:8.7px;color:#707075;font-weight:400;font-style:normal;font-family:'Liberation Sans', sans-serif;transform:scaleX(0.920);transform-origin:0 0;">-</div>
<div class="t" style="left:820.20px;top:263.99px;font-size:8.7px;color:#6c3fc4;font-weight:400;font-style:normal;font-family:'Liberation Sans', sans-serif;transform:scaleX(0.945);transform-origin:0 0;">Артемьев Алексей Арсенович</div>
<svg class="r" style="left:163.6px;top:288.12px" width="5.2" height="6.4" viewBox="0 0 5.2 6.4"><path d="M0.7 0.7 L4.3 3.2 L0.7 5.7" fill="none" stroke="#6a6a70" stroke-width="0.95"/></svg>
<div class="t" style="left:186.60px;top:287.36px;font-size:8.7px;color:#707075;font-weight:400;font-style:normal;font-family:'Liberation Sans', sans-serif;transform:scaleX(0.906);transform-origin:0 0;">301031</div>
<div class="t" style="left:250.30px;top:287.36px;font-size:8.7px;color:#707075;font-weight:400;font-style:normal;font-family:'Liberation Sans', sans-serif;transform:scaleX(0.953);transform-origin:0 0;">Получения</div>
<div class="t" style="left:351.80px;top:287.36px;font-size:8.7px;color:#6c3fc4;font-weight:400;font-style:normal;font-family:'Liberation Sans', sans-serif;transform:scaleX(0.949);transform-origin:0 0;">Магазин №4</div>
<div class="t" style="left:448.75px;top:287.36px;font-size:8.7px;color:#707075;font-weight:400;font-style:normal;font-family:'Liberation Sans', sans-serif;transform:scaleX(0.924);transform-origin:0 0;">12-09-2021 18:59:39</div>
<div class="t" style="left:534.30px;top:287.36px;font-size:8.7px;color:#707075;font-weight:400;font-style:normal;font-family:'Liberation Sans', sans-serif;transform:scaleX(0.920);transform-origin:0 0;">2</div>
<div class="t" style="left:650.00px;top:287.36px;font-size:8.7px;color:#707075;font-weight:400;font-style:normal;font-family:'Liberation Sans', sans-serif;transform:scaleX(0.903);transform-origin:0 0;">522,72</div>
<div class="t" style="left:713.20px;top:287.36px;font-size:8.7px;color:#707075;font-weight:400;font-style:normal;font-family:'Liberation Sans', sans-serif;transform:scaleX(0.920);transform-origin:0 0;">-</div>
<div class="t" style="left:820.20px;top:287.36px;font-size:8.7px;color:#6c3fc4;font-weight:400;font-style:normal;font-family:'Liberation Sans', sans-serif;transform:scaleX(0.945);transform-origin:0 0;">Савельев Андрон Фадеевич</div>
<svg class="r" style="left:163.6px;top:311.49px" width="5.2" height="6.4" viewBox="0 0 5.2 6.4"><path d="M0.7 0.7 L4.3 3.2 L0.7 5.7" fill="none" stroke="#6a6a70" stroke-width="0.95"/></svg>
<div class="t" style="left:186.60px;top:310.73px;font-size:8.7px;color:#707075;font-weight:400;font-style:normal;font-family:'Liberation Sans', sans-serif;transform:scaleX(0.906);transform-origin:0 0;">300515</div>
<div class="t" style="left:250.30px;top:310.73px;font-size:8.7px;color:#707075;font-weight:400;font-style:normal;font-family:'Liberation Sans', sans-serif;transform:scaleX(0.953);transform-origin:0 0;">Получения</div>
<div class="t" style="left:351.80px;top:310.73px;font-size:8.7px;color:#6c3fc4;font-weight:400;font-style:normal;font-family:'Liberation Sans', sans-serif;transform:scaleX(0.949);transform-origin:0 0;">Магазин №29</div>
<div class="t" style="left:448.75px;top:310.73px;font-size:8.7px;color:#707075;font-weight:400;font-style:normal;font-family:'Liberation Sans', sans-serif;transform:scaleX(0.924);transform-origin:0 0;">12-09-2021 18:57:52</div>
<div class="t" style="left:534.30px;top:310.73px;font-size:8.7px;color:#707075;font-weight:400;font-style:normal;font-family:'Liberation Sans', sans-serif;transform:scaleX(0.920);transform-origin:0 0;">4</div>
<div class="t" style="left:650.00px;top:310.73px;font-size:8.7px;color:#707075;font-weight:400;font-style:normal;font-family:'Liberation Sans', sans-serif;transform:scaleX(0.903);transform-origin:0 0;">520,56</div>
<div class="t" style="left:713.20px;top:310.73px;font-size:8.7px;color:#707075;font-weight:400;font-style:normal;font-family:'Liberation Sans', sans-serif;transform:scaleX(0.920);transform-origin:0 0;">-</div>
<div class="t" style="left:820.20px;top:310.73px;font-size:8.7px;color:#6c3fc4;font-weight:400;font-style:normal;font-family:'Liberation Sans', sans-serif;transform:scaleX(0.945);transform-origin:0 0;">тов. Красильникова Маргарита Владиславовна</div>
<svg class="r" style="left:163.6px;top:334.86px" width="5.2" height="6.4" viewBox="0 0 5.2 6.4"><path d="M0.7 0.7 L4.3 3.2 L0.7 5.7" fill="none" stroke="#6a6a70" stroke-width="0.95"/></svg>
<div class="t" style="left:186.60px;top:334.10px;font-size:8.7px;color:#707075;font-weight:400;font-style:normal;font-family:'Liberation Sans', sans-serif;transform:scaleX(0.906);transform-origin:0 0;">300373</div>
<div class="t" style="left:250.30px;top:334.10px;font-size:8.7px;color:#707075;font-weight:400;font-style:normal;font-family:'Liberation Sans', sans-serif;transform:scaleX(0.953);transform-origin:0 0;">Получения</div>
<div class="t" style="left:351.80px;top:334.10px;font-size:8.7px;color:#6c3fc4;font-weight:400;font-style:normal;font-family:'Liberation Sans', sans-serif;transform:scaleX(0.949);transform-origin:0 0;">Магазин №31</div>
<div class="t" style="left:448.75px;top:334.10px;font-size:8.7px;color:#707075;font-weight:400;font-style:normal;font-family:'Liberation Sans', sans-serif;transform:scaleX(0.924);transform-origin:0 0;">12-09-2021 18:39:17</div>
<div class="t" style="left:534.30px;top:334.10px;font-size:8.7px;color:#707075;font-weight:400;font-style:normal;font-family:'Liberation Sans', sans-serif;transform:scaleX(0.920);transform-origin:0 0;">1</div>
<div class="t" style="left:650.00px;top:334.10px;font-size:8.7px;color:#707075;font-weight:400;font-style:normal;font-family:'Liberation Sans', sans-serif;transform:scaleX(0.903);transform-origin:0 0;">1 860</div>
<div class="t" style="left:713.20px;top:334.10px;font-size:8.7px;color:#707075;font-weight:400;font-style:normal;font-family:'Liberation Sans', sans-serif;transform:scaleX(0.920);transform-origin:0 0;">-</div>
<div class="t" style="left:820.20px;top:334.10px;font-size:8.7px;color:#6c3fc4;font-weight:400;font-style:normal;font-family:'Liberation Sans', sans-serif;transform:scaleX(0.945);transform-origin:0 0;">Мельников Дементий Терентьевич</div>
<svg class="r" style="left:163.6px;top:358.23px" width="5.2" height="6.4" viewBox="0 0 5.2 6.4"><path d="M0.7 0.7 L4.3 3.2 L0.7 5.7" fill="none" stroke="#6a6a70" stroke-width="0.95"/></svg>
<div class="t" style="left:186.60px;top:357.47px;font-size:8.7px;color:#707075;font-weight:400;font-style:normal;font-family:'Liberation Sans', sans-serif;transform:scaleX(0.906);transform-origin:0 0;">301164</div>
<div class="t" style="left:250.30px;top:357.47px;font-size:8.7px;color:#707075;font-weight:400;font-style:normal;font-family:'Liberation Sans', sans-serif;transform:scaleX(0.953);transform-origin:0 0;">Получения</div>
<div class="t" style="left:351.80px;top:357.47px;font-size:8.7px;color:#6c3fc4;font-weight:400;font-style:normal;font-family:'Liberation Sans', sans-serif;transform:scaleX(0.949);transform-origin:0 0;">Магазин №27</div>
<div class="t" style="left:448.75px;top:357.47px;font-size:8.7px;color:#707075;font-weight:400;font-style:normal;font-family:'Liberation Sans', sans-serif;transform:scaleX(0.924);transform-origin:0 0;">12-09-2021 18:33:35</div>
<div class="t" style="left:534.30px;top:357.47px;font-size:8.7px;color:#707075;font-weight:400;font-style:normal;font-family:'Liberation Sans', sans-serif;transform:scaleX(0.920);transform-origin:0 0;">5</div>
<div class="t" style="left:650.00px;top:357.47px;font-size:8.7px;color:#707075;font-weight:400;font-style:normal;font-family:'Liberation Sans', sans-serif;transform:scaleX(0.903);transform-origin:0 0;">764,4</div>
<div class="t" style="left:713.20px;top:357.47px;font-size:8.7px;color:#707075;font-weight:400;font-style:normal;font-family:'Liberation Sans', sans-serif;transform:scaleX(0.920);transform-origin:0 0;">-</div>
<div class="t" style="left:820.20px;top:357.47px;font-size:8.7px;color:#6c3fc4;font-weight:400;font-style:normal;font-family:'Liberation Sans', sans-serif;transform:scaleX(0.945);transform-origin:0 0;">Большаков Остап Устинович</div>
<svg class="r" style="left:163.6px;top:381.60px" width="5.2" height="6.4" viewBox="0 0 5.2 6.4"><path d="M0.7 0.7 L4.3 3.2 L0.7 5.7" fill="none" stroke="#6a6a70" stroke-width="0.95"/></svg>
<div class="t" style="left:186.60px;top:380.84px;font-size:8.7px;color:#707075;font-weight:400;font-style:normal;font-family:'Liberation Sans', sans-serif;transform:scaleX(0.906);transform-origin:0 0;">300056</div>
<div class="t" style="left:250.30px;top:380.84px;font-size:8.7px;color:#707075;font-weight:400;font-style:normal;font-family:'Liberation Sans', sans-serif;transform:scaleX(0.953);transform-origin:0 0;">Получения</div>
<div class="t" style="left:351.80px;top:380.84px;font-size:8.7px;color:#6c3fc4;font-weight:400;font-style:normal;font-family:'Liberation Sans', sans-serif;transform:scaleX(0.949);transform-origin:0 0;">Магазин №27</div>
<div class="t" style="left:448.75px;top:380.84px;font-size:8.7px;color:#707075;font-weight:400;font-style:normal;font-family:'Liberation Sans', sans-serif;transform:scaleX(0.924);transform-origin:0 0;">12-09-2021 18:32:54</div>
<div class="t" style="left:534.30px;top:380.84px;font-size:8.7px;color:#707075;font-weight:400;font-style:normal;font-family:'Liberation Sans', sans-serif;transform:scaleX(0.920);transform-origin:0 0;">46</div>
<div class="t" style="left:650.00px;top:380.84px;font-size:8.7px;color:#707075;font-weight:400;font-style:normal;font-family:'Liberation Sans', sans-serif;transform:scaleX(0.903);transform-origin:0 0;">5 022,352</div>
<div class="t" style="left:713.20px;top:380.84px;font-size:8.7px;color:#707075;font-weight:400;font-style:normal;font-family:'Liberation Sans', sans-serif;transform:scaleX(0.920);transform-origin:0 0;">-</div>
<div class="t" style="left:820.20px;top:380.84px;font-size:8.7px;color:#6c3fc4;font-weight:400;font-style:normal;font-family:'Liberation Sans', sans-serif;transform:scaleX(0.945);transform-origin:0 0;">Большаков Остап Устинович</div>
<svg class="r" style="left:163.6px;top:404.97px" width="5.2" height="6.4" viewBox="0 0 5.2 6.4"><path d="M0.7 0.7 L4.3 3.2 L0.7 5.7" fill="none" stroke="#6a6a70" stroke-width="0.95"/></svg>
<div class="t" style="left:186.60px;top:404.21px;font-size:8.7px;color:#707075;font-weight:400;font-style:normal;font-family:'Liberation Sans', sans-serif;transform:scaleX(0.906);transform-origin:0 0;">301350</div>
<div class="t" style="left:250.30px;top:404.21px;font-size:8.7px;color:#707075;font-weight:400;font-style:normal;font-family:'Liberation Sans', sans-serif;transform:scaleX(0.953);transform-origin:0 0;">Получения</div>
<div class="t" style="left:351.80px;top:404.21px;font-size:8.7px;color:#6c3fc4;font-weight:400;font-style:normal;font-family:'Liberation Sans', sans-serif;transform:scaleX(0.949);transform-origin:0 0;">Магазин №5</div>
<div class="t" style="left:448.75px;top:404.21px;font-size:8.7px;color:#707075;font-weight:400;font-style:normal;font-family:'Liberation Sans', sans-serif;transform:scaleX(0.924);transform-origin:0 0;">12-09-2021 18:31:50</div>
<div class="t" style="left:534.30px;top:404.21px;font-size:8.7px;color:#707075;font-weight:400;font-style:normal;font-family:'Liberation Sans', sans-serif;transform:scaleX(0.920);transform-origin:0 0;">7</div>
<div class="t" style="left:650.00px;top:404.21px;font-size:8.7px;color:#707075;font-weight:400;font-style:normal;font-family:'Liberation Sans', sans-serif;transform:scaleX(0.903);transform-origin:0 0;">155,33</div>
<div class="t" style="left:713.20px;top:404.21px;font-size:8.7px;color:#707075;font-weight:400;font-style:normal;font-family:'Liberation Sans', sans-serif;transform:scaleX(0.920);transform-origin:0 0;">-</div>
<div class="t" style="left:820.20px;top:404.21px;font-size:8.7px;color:#6c3fc4;font-weight:400;font-style:normal;font-family:'Liberation Sans', sans-serif;transform:scaleX(0.945);transform-origin:0 0;">Мельников Олимпий Ильясович</div>
<svg class="r" style="left:163.6px;top:428.34px" width="5.2" height="6.4" viewBox="0 0 5.2 6.4"><path d="M0.7 0.7 L4.3 3.2 L0.7 5.7" fill="none" stroke="#6a6a70" stroke-width="0.95"/></svg>
<div class="t" style="left:186.60px;top:427.58px;font-size:8.7px;color:#707075;font-weight:400;font-style:normal;font-family:'Liberation Sans', sans-serif;transform:scaleX(0.906);transform-origin:0 0;">301274</div>
<div class="t" style="left:250.30px;top:427.58px;font-size:8.7px;color:#707075;font-weight:400;font-style:normal;font-family:'Liberation Sans', sans-serif;transform:scaleX(0.953);transform-origin:0 0;">Получения</div>
<div class="t" style="left:351.80px;top:427.58px;font-size:8.7px;color:#6c3fc4;font-weight:400;font-style:normal;font-family:'Liberation Sans', sans-serif;transform:scaleX(0.949);transform-origin:0 0;">Магазин №5</div>
<div class="t" style="left:448.75px;top:427.58px;font-size:8.7px;color:#707075;font-weight:400;font-style:normal;font-family:'Liberation Sans', sans-serif;transform:scaleX(0.924);transform-origin:0 0;">12-09-2021 18:31:20</div>
<div class="t" style="left:534.30px;top:427.58px;font-size:8.7px;color:#707075;font-weight:400;font-style:normal;font-family:'Liberation Sans', sans-serif;transform:scaleX(0.920);transform-origin:0 0;">1</div>
<div class="t" style="left:650.00px;top:427.58px;font-size:8.7px;color:#707075;font-weight:400;font-style:normal;font-family:'Liberation Sans', sans-serif;transform:scaleX(0.903);transform-origin:0 0;">1 080</div>
<div class="t" style="left:713.20px;top:427.58px;font-size:8.7px;color:#707075;font-weight:400;font-style:normal;font-family:'Liberation Sans', sans-serif;transform:scaleX(0.920);transform-origin:0 0;">-</div>
<div class="t" style="left:820.20px;top:427.58px;font-size:8.7px;color:#6c3fc4;font-weight:400;font-style:normal;font-family:'Liberation Sans', sans-serif;transform:scaleX(0.945);transform-origin:0 0;">Дементьев Карп Георгиевич</div>
<svg class="r" style="left:163.6px;top:451.71px" width="5.2" height="6.4" viewBox="0 0 5.2 6.4"><path d="M0.7 0.7 L4.3 3.2 L0.7 5.7" fill="none" stroke="#6a6a70" stroke-width="0.95"/></svg>
<div class="t" style="left:186.60px;top:450.95px;font-size:8.7px;color:#707075;font-weight:400;font-style:normal;font-family:'Liberation Sans', sans-serif;transform:scaleX(0.906);transform-origin:0 0;">299634</div>
<div class="t" style="left:250.30px;top:450.95px;font-size:8.7px;color:#707075;font-weight:400;font-style:normal;font-family:'Liberation Sans', sans-serif;transform:scaleX(0.953);transform-origin:0 0;">Получения</div>
<div class="t" style="left:351.80px;top:450.95px;font-size:8.7px;color:#6c3fc4;font-weight:400;font-style:normal;font-family:'Liberation Sans', sans-serif;transform:scaleX(0.949);transform-origin:0 0;">Магазин №31</div>
<div class="t" style="left:448.75px;top:450.95px;font-size:8.7px;color:#707075;font-weight:400;font-style:normal;font-family:'Liberation Sans', sans-serif;transform:scaleX(0.924);transform-origin:0 0;">12-09-2021 18:30:33</div>
<div class="t" style="left:534.30px;top:450.95px;font-size:8.7px;color:#707075;font-weight:400;font-style:normal;font-family:'Liberation Sans', sans-serif;transform:scaleX(0.920);transform-origin:0 0;">2</div>
<div class="t" style="left:650.00px;top:450.95px;font-size:8.7px;color:#707075;font-weight:400;font-style:normal;font-family:'Liberation Sans', sans-serif;transform:scaleX(0.903);transform-origin:0 0;">785,4</div>
<div class="t" style="left:713.20px;top:450.95px;font-size:8.7px;color:#707075;font-weight:400;font-style:normal;font-family:'Liberation Sans', sans-serif;transform:scaleX(0.920);transform-origin:0 0;">-</div>
<div class="t" style="left:820.20px;top:450.95px;font-size:8.7px;color:#6c3fc4;font-weight:400;font-style:normal;font-family:'Liberation Sans', sans-serif;transform:scaleX(0.945);transform-origin:0 0;">Попов Анисим Феоктистович</div>
<svg class="r" style="left:163.6px;top:475.08px" width="5.2" height="6.4" viewBox="0 0 5.2 6.4"><path d="M0.7 0.7 L4.3 3.2 L0.7 5.7" fill="none" stroke="#6a6a70" stroke-width="0.95"/></svg>
<div class="t" style="left:186.60px;top:474.32px;font-size:8.7px;color:#707075;font-weight:400;font-style:normal;font-family:'Liberation Sans', sans-serif;transform:scaleX(0.906);transform-origin:0 0;">299651</div>
<div class="t" style="left:250.30px;top:474.32px;font-size:8.7px;color:#707075;font-weight:400;font-style:normal;font-family:'Liberation Sans', sans-serif;transform:scaleX(0.953);transform-origin:0 0;">Получения</div>
<div class="t" style="left:351.80px;top:474.32px;font-size:8.7px;color:#6c3fc4;font-weight:400;font-style:normal;font-family:'Liberation Sans', sans-serif;transform:scaleX(0.949);transform-origin:0 0;">Магазин №33</div>
<div class="t" style="left:448.75px;top:474.32px;font-size:8.7px;color:#707075;font-weight:400;font-style:normal;font-family:'Liberation Sans', sans-serif;transform:scaleX(0.924);transform-origin:0 0;">12-09-2021 18:28:45</div>
<div class="t" style="left:534.30px;top:474.32px;font-size:8.7px;color:#707075;font-weight:400;font-style:normal;font-family:'Liberation Sans', sans-serif;transform:scaleX(0.920);transform-origin:0 0;">23</div>
<div class="t" style="left:650.00px;top:474.32px;font-size:8.7px;color:#707075;font-weight:400;font-style:normal;font-family:'Liberation Sans', sans-serif;transform:scaleX(0.903);transform-origin:0 0;">7 273,136</div>
<div class="t" style="left:713.20px;top:474.32px;font-size:8.7px;color:#707075;font-weight:400;font-style:normal;font-family:'Liberation Sans', sans-serif;transform:scaleX(0.920);transform-origin:0 0;">-</div>
<div class="t" style="left:820.20px;top:474.32px;font-size:8.7px;color:#6c3fc4;font-weight:400;font-style:normal;font-family:'Liberation Sans', sans-serif;transform:scaleX(0.945);transform-origin:0 0;">Артемьев Алексей Арсенович</div>
<svg class="r" style="left:163.6px;top:498.45px" width="5.2" height="6.4" viewBox="0 0 5.2 6.4"><path d="M0.7 0.7 L4.3 3.2 L0.7 5.7" fill="none" stroke="#6a6a70" stroke-width="0.95"/></svg>
<div class="t" style="left:186.60px;top:497.69px;font-size:8.7px;color:#707075;font-weight:400;font-style:normal;font-family:'Liberation Sans', sans-serif;transform:scaleX(0.906);transform-origin:0 0;">300120</div>
<div class="t" style="left:250.30px;top:497.69px;font-size:8.7px;color:#707075;font-weight:400;font-style:normal;font-family:'Liberation Sans', sans-serif;transform:scaleX(0.953);transform-origin:0 0;">Получения</div>
<div class="t" style="left:351.80px;top:497.69px;font-size:8.7px;color:#6c3fc4;font-weight:400;font-style:normal;font-family:'Liberation Sans', sans-serif;transform:scaleX(0.949);transform-origin:0 0;">Магазин №31</div>
<div class="t" style="left:448.75px;top:497.69px;font-size:8.7px;color:#707075;font-weight:400;font-style:normal;font-family:'Liberation Sans', sans-serif;transform:scaleX(0.924);transform-origin:0 0;">12-09-2021 18:23:39</div>
<div class="t" style="left:534.30px;top:497.69px;font-size:8.7px;color:#707075;font-weight:400;font-style:normal;font-family:'Liberation Sans', sans-serif;transform:scaleX(0.920);transform-origin:0 0;">1</div>
<div class="t" style="left:650.00px;top:497.69px;font-size:8.7px;color:#707075;font-weight:400;font-style:normal;font-family:'Liberation Sans', sans-serif;transform:scaleX(0.903);transform-origin:0 0;">261</div>
<div class="t" style="left:713.20px;top:497.69px;font-size:8.7px;color:#707075;font-weight:400;font-style:normal;font-family:'Liberation Sans', sans-serif;transform:scaleX(0.920);transform-origin:0 0;">-</div>
<div class="t" style="left:820.20px;top:497.69px;font-size:8.7px;color:#6c3fc4;font-weight:400;font-style:normal;font-family:'Liberation Sans', sans-serif;transform:scaleX(0.945);transform-origin:0 0;">Орлов Мартын Васильевич</div>
<div class="r" style="left:1004px;top:94px;width:10px;height:420px;background:#ffffff;"></div>
<div class="r" style="left:1010.2px;top:141px;width:3.7px;height:328px;background:#8c8b90;"></div>
<div class="r" style="left:1004.1px;top:110.6px;width:19.9px;height:30.4px;background:#6e30d4;"></div>
<div class="r" style="left:1004.1px;top:129.3px;width:19.9px;height:1px;background:repeating-linear-gradient(90deg,#d4c4f5 0 1.2px,transparent 1.2px 2.2px)"></div>
<svg class="r" style="left:1011.8px;top:115.8px" width="9.2" height="8.6" viewBox="0 0 9.2 8.6"><rect x="0.6" y="0.6" width="8" height="7.4" rx="1.4" fill="#cdb6f4" stroke="#f4efff" stroke-width="1.1"/><path d="M4.6 1.8 V7" stroke="#6e30d4" stroke-width="1"/><path d="M2.2 2.2 L3.6 3.6 V6.4 H2.2 Z M7 2.2 L5.6 3.6 V6.4 H7 Z" fill="#8a5ae0"/></svg>
<svg class="r" style="left:1012.6px;top:134.4px" width="7" height="4.8" viewBox="0 0 7 4.8"><path d="M0.5 0.6 L3.5 4 L6.5 0.6" fill="none" stroke="#f1ecff" stroke-width="0.95"/></svg>
<div class="r" style="left:975.7px;top:455.8px;width:35.2px;height:35.2px;border-radius:50%;background:#6e30d4"></div>
<svg class="r" style="left:983.8px;top:466.5px" width="19" height="15.5" viewBox="0 0 19 15.5"><path d="M0.6 2.6 L17.9 0.5 L17.7 11.5 L11.4 12.3 L9.6 14.6 L8.1 12.3 L1.3 12.3 Z" fill="#ffffff"/></svg>
<div class="r" style="left:138px;top:513px;width:886px;height:1px;background:#1a1a1a;"></div>
</body></html>
